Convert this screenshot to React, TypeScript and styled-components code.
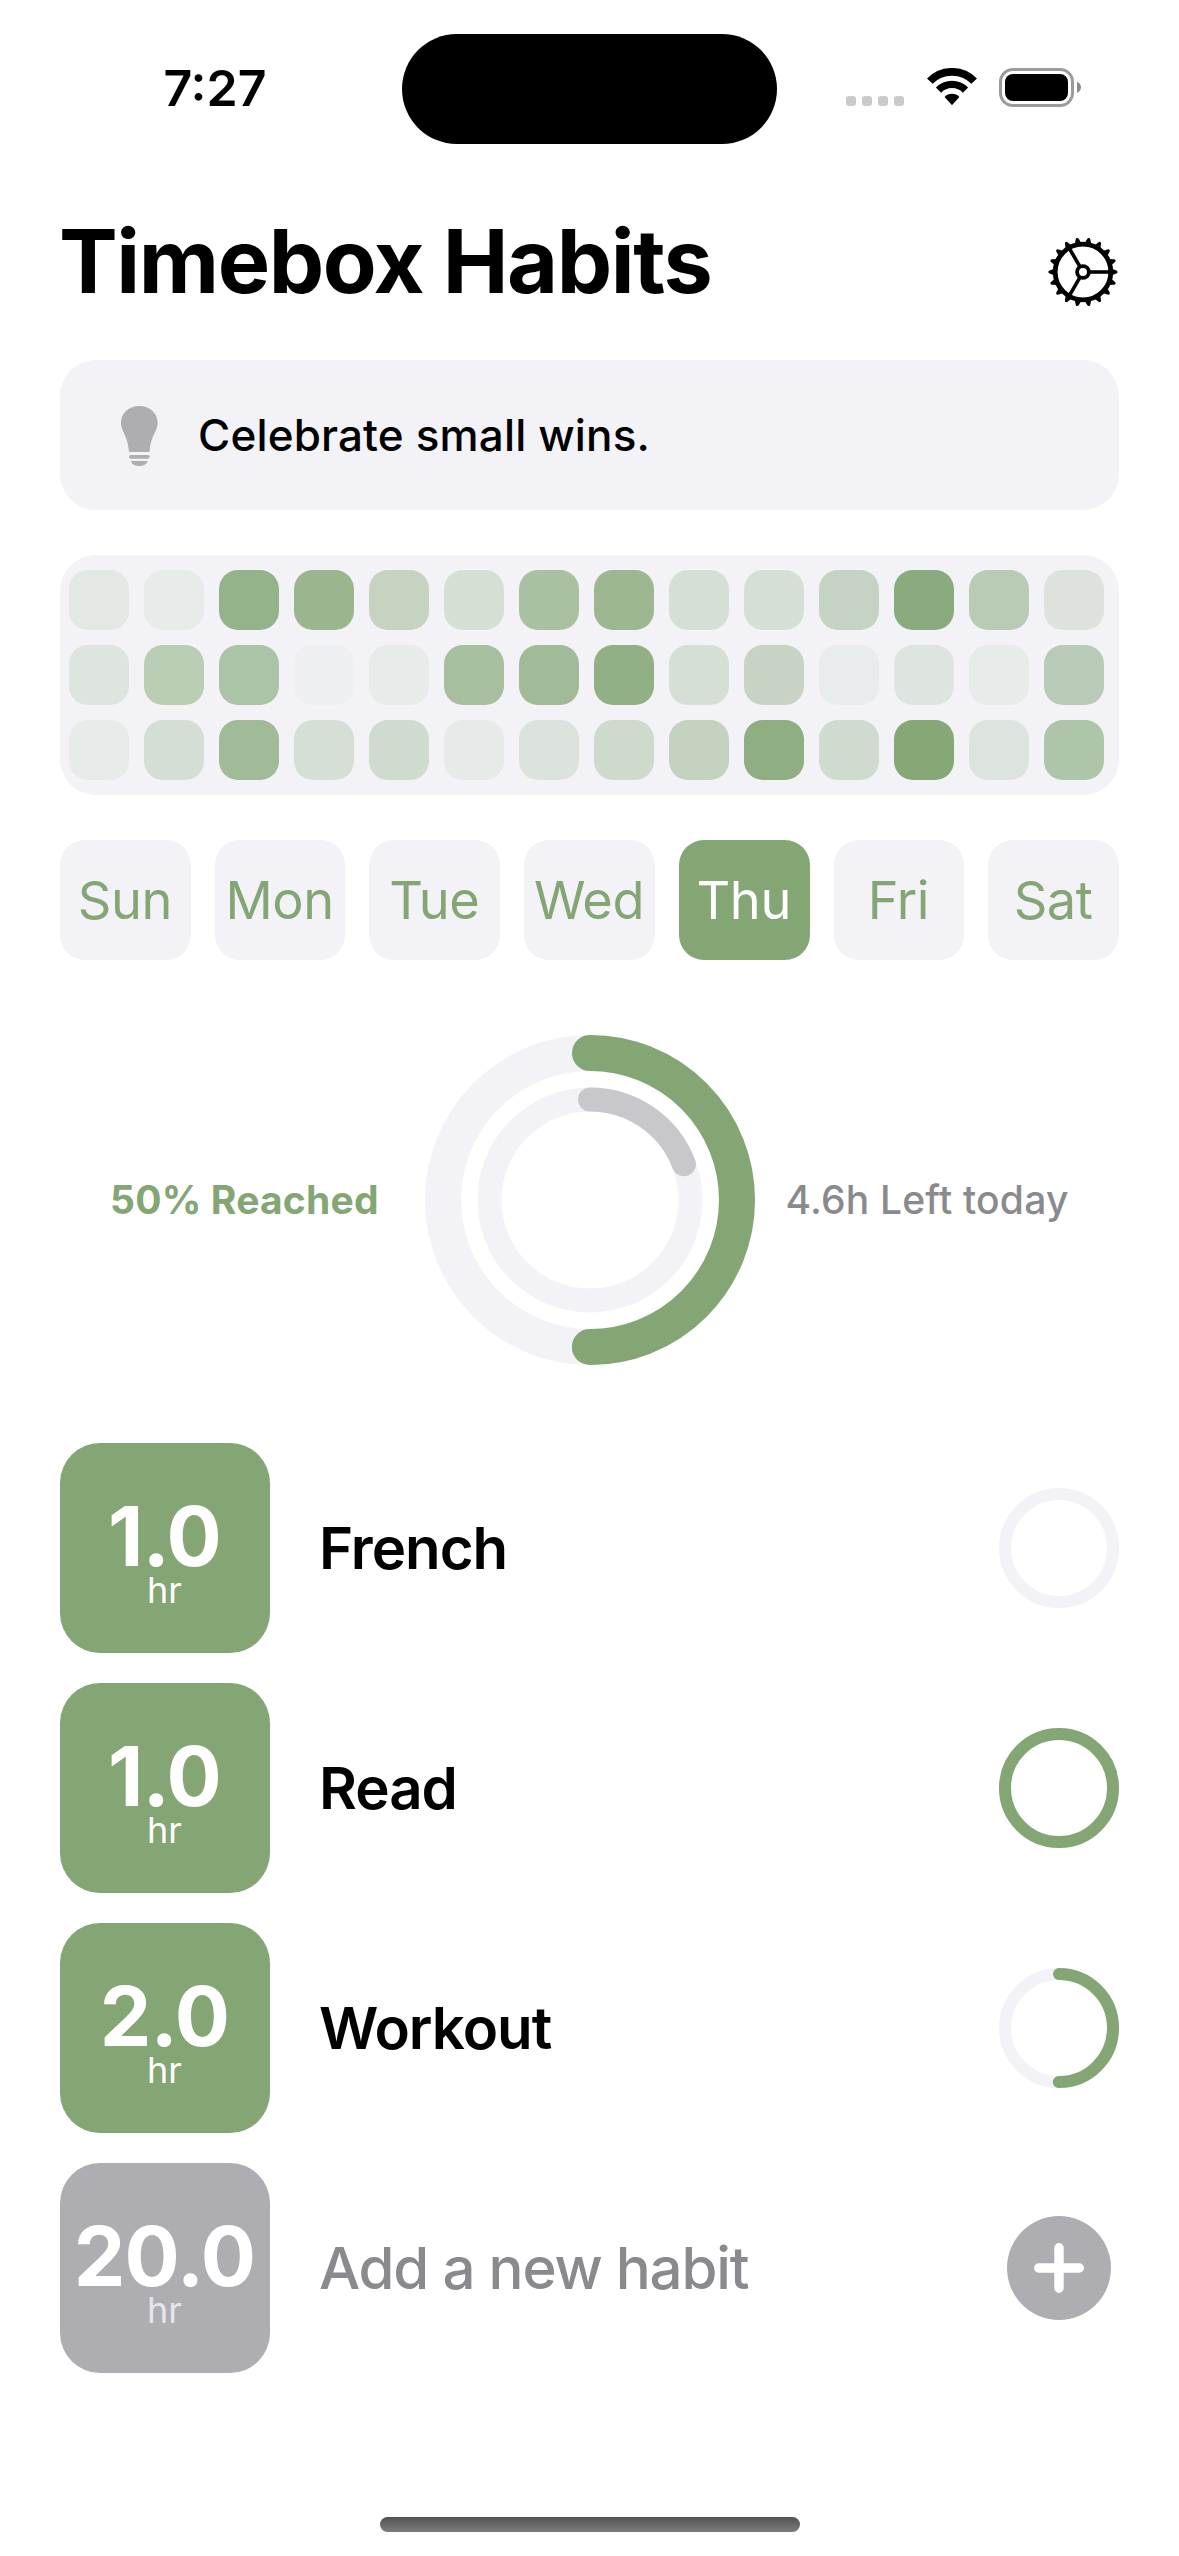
import React from "react";
import styled, { createGlobalStyle } from "styled-components";

const GREEN = "#83a674";
const PANEL = "#f2f2f7";
const GRAY = "#aeaeb2";
const LABEL = "#8a8a8e";

const GlobalStyle = createGlobalStyle`
  * { box-sizing: border-box; }
  body { margin: 0; background: #fff; }
`;

const Screen = styled.div`
  width: 1179px;
  height: 2556px;
  display: flex;
  flex-direction: column;
  background: #fff;
  color: #000;
  font-family: Inter, "Liberation Sans", sans-serif;
  overflow: hidden;
`;

const StatusBar = styled.div`
  height: 177px;
  padding-top: 34px;
  display: grid;
  grid-template-columns: 402px 375px 1fr;
  align-items: start;
`;

const Clock = styled.div`
  height: 108px;
  line-height: 108px;
  padding-left: 28px;
  text-align: center;
  font-size: 50px;
  font-weight: 600;
`;

const Island = styled.div`
  height: 110px;
  border-radius: 55px;
  background: #000;
`;

const StatusIcons = styled.div`
  height: 110px;
  padding: 34px 0 0 69px;
  display: flex;
  align-items: flex-start;
`;

const SignalDots = styled.div`
  display: flex;
  gap: 6px;
  padding-top: 28px;
  margin-right: 22px;
`;

const SignalDot = styled.span`
  width: 10px;
  height: 10px;
  border-radius: 3px;
  background: #cbcbcb;
`;

const Battery = styled.div`
  margin-left: 21px;
`;

const Header = styled.header`
  height: 183px;
  padding: 0 60px 0 59px;
  display: flex;
  justify-content: space-between;
  align-items: flex-start;
`;

const Title = styled.h1`
  margin: 0;
  padding-top: 34px;
  font-size: 88px;
  line-height: 100px;
  font-weight: 700;
  letter-spacing: -1.4px;
  white-space: nowrap;
`;

const SettingsButton = styled.button`
  margin: 59px 0 0;
  padding: 0;
  border: 0;
  background: none;
  display: flex;
`;

const Content = styled.main`
  padding: 0 60px;
  display: flex;
  flex-direction: column;
`;

const TipCard = styled.section`
  height: 150px;
  padding: 2px 0 0 61px;
  display: flex;
  align-items: center;
  gap: 40px;
  border-radius: 36px;
  background: ${PANEL};
`;

const TipText = styled.p`
  margin: 0 0 2px;
  font-size: 44px;
  line-height: 60px;
  font-weight: 460;
  letter-spacing: 0.15px;
`;

const HeatMap = styled.section`
  margin-top: 45px;
  height: 240px;
  padding: 15px 15px 15px 9px;
  display: grid;
  grid-template-columns: repeat(14, 60px);
  grid-auto-rows: 60px;
  gap: 15px;
  border-radius: 36px;
  background: ${PANEL};
`;

const HeatCell = styled.span<{ $color: string }>`
  border-radius: 19px;
  background: ${(p) => p.$color};
`;

const DayTabs = styled.nav`
  margin-top: 45px;
  display: grid;
  grid-template-columns: repeat(7, 1fr);
  gap: 24px;
`;

const DayTab = styled.button<{ $active: boolean }>`
  height: 120px;
  padding: 0 1px 0 0;
  border: 0;
  border-radius: 25px;
  background: ${(p) => (p.$active ? GREEN : PANEL)};
  color: ${(p) => (p.$active ? "#fff" : GREEN)};
  font-family: inherit;
  font-size: 52.3px;
  line-height: 120px;
  font-weight: 400;
  letter-spacing: -0.4px;
`;

const Summary = styled.section`
  margin-top: 75px;
  height: 330px;
  display: grid;
  grid-template-columns: 1fr 330px 1fr;
  align-items: center;
`;

const SummaryText = styled.div<{ $reached?: boolean }>`
  font-size: 39px;
  line-height: 50px;
  white-space: nowrap;
  padding-left: ${(p) => (p.$reached ? "50px" : "31px")};
  color: ${(p) => (p.$reached ? GREEN : LABEL)};
  font-weight: ${(p) => (p.$reached ? 700 : 500)};
  letter-spacing: 0.2px;
`;

const HabitList = styled.section`
  margin-top: 78px;
  display: flex;
  flex-direction: column;
  gap: 30px;
`;

const HabitRow = styled.div`
  height: 210px;
  display: grid;
  grid-template-columns: 210px 1fr 120px;
  align-items: center;
`;

const HourTile = styled.div<{ $muted?: boolean }>`
  height: 210px;
  padding: 58px 1px 0 0;
  display: flex;
  flex-direction: column;
  align-items: center;
  border-radius: 40px;
  background: ${(p) => (p.$muted ? GRAY : GREEN)};
  color: #fff;
`;

const HourValue = styled.div`
  font-size: 82px;
  line-height: 72px;
  font-weight: 700;
  letter-spacing: -0.8px;
`;

const HourUnit = styled.div<{ $muted?: boolean }>`
  font-size: 36px;
  line-height: 35px;
  color: ${(p) => (p.$muted ? "#e5e5ea" : "#fff")};
`;

const HabitName = styled.div<{ $muted?: boolean }>`
  padding-left: 49px;
  font-size: 58.2px;
  line-height: 70px;
  font-weight: ${(p) => (p.$muted ? 500 : 600)};
  color: ${(p) => (p.$muted ? LABEL : "#000")};
  letter-spacing: ${(p) => (p.$muted ? "-1.2px" : "-1px")};
  white-space: nowrap;
`;

const AddButton = styled.button`
  justify-self: center;
  width: 104px;
  height: 104px;
  padding: 0;
  border: 0;
  border-radius: 50%;
  background: ${GRAY};
  display: flex;
  align-items: center;
  justify-content: center;
`;

const HomeArea = styled.footer`
  margin-top: auto;
  height: 39px;
  display: flex;
  justify-content: center;
`;

const HomeIndicator = styled.div`
  width: 420px;
  height: 15px;
  border-radius: 8px;
  background: linear-gradient(#525252, #7d7d7d);
`;

const WifiIcon = () => (
  <svg width="52" height="38" viewBox="-26 -35 52 38">
    <g fill="none" stroke="#000">
      <path d="M-22.2 -21.9A31.2 31.2 0 0 1 22.2 -21.9" strokeWidth="7.7" />
      <path d="M-13.5 -12.9A18.7 18.7 0 0 1 13.5 -12.9" strokeWidth="7.4" />
    </g>
    <path d="M-7.4 -6A10 10 0 0 1 7.4 -6L0.6 1.6Q0 2.2 -0.6 1.6Z" />
  </svg>
);

const BatteryIcon = () => (
  <svg width="83" height="39" viewBox="0 0 83 39">
    <rect x="1.5" y="1.5" width="72" height="36" rx="12.5" fill="none" stroke="#9b9b9b" strokeWidth="3" />
    <rect x="6" y="6" width="63" height="27" rx="8" />
    <path d="M78 13.7Q82 15.5 82 19.3T78 25Z" fill="#8e8e8e" />
  </svg>
);

const GearIcon = () => (
  <svg width="72" height="72" viewBox="-36 -36 72 72">
    {Array.from({ length: 18 }, (_, i) => (
      <path
        key={i}
        d="M28.5 -3.4L33.2 -1.6Q34.6 -1.2 34.6 0T33.2 1.6L28.5 3.4Z"
        transform={`rotate(${i * 20})`}
      />
    ))}
    <g fill="none" stroke="#000">
      <circle r="27.8" strokeWidth="4.8" />
      <circle r="5.9" strokeWidth="3.8" />
      {[0, 120, 240].map((a) => (
        <path key={a} d="M7 0H27" strokeWidth="3.6" transform={`rotate(${a})`} />
      ))}
    </g>
  </svg>
);

const BulbIcon = () => (
  <svg width="37" height="60" viewBox="0 0 37 60" fill={GRAY}>
    <path d="M18.3 0C8 0 0 7.3 0 16.5C0 26 6.6 28.5 7.9 45Q8 46 9 46H27.6Q28.6 46 28.7 45C30 28.5 36.6 26 36.6 16.5C36.6 7.3 28.6 0 18.3 0Z" />
    <rect x="8" y="49" width="20.6" height="3.7" rx="1.8" />
    <path d="M10 55H26.6C26 58.3 22.5 60 18.3 60S10.6 58.3 10 55Z" />
  </svg>
);

type ArcProps = { r: number; width: number; value: number; color: string };

const Arc = ({ r, width, value, color }: ArcProps) => {
  const length = 2 * Math.PI * r;
  return (
    <g fill="none" strokeWidth={width} transform="rotate(-90)">
      <circle r={r} stroke={PANEL} />
      {value > 0 && (
        <circle
          r={r}
          stroke={color}
          strokeLinecap="round"
          strokeDasharray={value < 1 ? `${length * value} ${length}` : undefined}
        />
      )}
    </g>
  );
};

const heat = [
  "#e3e8e4", "#e7ecea", "#95b38a", "#9bb58f", "#c5d3c0", "#d5dfd4", "#a9c1a1",
  "#9db891", "#d5dfd6", "#d5dfd6", "#c5d3c2", "#8aab7d", "#bacbb5", "#dde3dc",
  "#dde5de", "#bacdb5", "#abc3a6", "#edeff0", "#e7ebe9", "#a8bf9f", "#a1ba97",
  "#92b085", "#d5dfd6", "#c9d3c3", "#e8eced", "#dee5e1", "#e7ebe9", "#b9cbb6",
  "#e7ebe9", "#d5ded5", "#a1ba97", "#d5dfd6", "#d0dbd0", "#e6ebe9", "#dbe3dc",
  "#cfdacd", "#c4d3bf", "#8fae81", "#cfdbcf", "#86a876", "#dde4e0", "#aec5a9",
];

const days = ["Sun", "Mon", "Tue", "Wed", "Thu", "Fri", "Sat"];

const habits = [
  { name: "French", hours: "1.0", progress: 0 },
  { name: "Read", hours: "1.0", progress: 1 },
  { name: "Workout", hours: "2.0", progress: 0.5 },
];

export default function App() {
  return (
    <Screen>
      <GlobalStyle />
      <StatusBar>
        <Clock>7:27</Clock>
        <Island />
        <StatusIcons>
          <SignalDots>
            {[0, 1, 2, 3].map((i) => (
              <SignalDot key={i} />
            ))}
          </SignalDots>
          <WifiIcon />
          <Battery>
            <BatteryIcon />
          </Battery>
        </StatusIcons>
      </StatusBar>
      <Header>
        <Title>Timebox Habits</Title>
        <SettingsButton aria-label="Settings">
          <GearIcon />
        </SettingsButton>
      </Header>
      <Content>
        <TipCard>
          <BulbIcon />
          <TipText>Celebrate small wins.</TipText>
        </TipCard>
        <HeatMap>
          {heat.map((color, i) => (
            <HeatCell key={i} $color={color} />
          ))}
        </HeatMap>
        <DayTabs>
          {days.map((day) => (
            <DayTab key={day} $active={day === "Thu"}>
              {day}
            </DayTab>
          ))}
        </DayTabs>
        <Summary>
          <SummaryText $reached>50% Reached</SummaryText>
          <svg width="330" height="330" viewBox="-165 -165 330 330">
            <Arc r={147} width={36} value={0.5} color={GREEN} />
            <Arc r={100.5} width={24} value={4.6 / 24} color="#c7c7cc" />
          </svg>
          <SummaryText>4.6h Left today</SummaryText>
        </Summary>
        <HabitList>
          {habits.map((habit) => (
            <HabitRow key={habit.name}>
              <HourTile>
                <HourValue>{habit.hours}</HourValue>
                <HourUnit>hr</HourUnit>
              </HourTile>
              <HabitName>{habit.name}</HabitName>
              <svg width="120" height="120" viewBox="-60 -60 120 120">
                <Arc r={54} width={12} value={habit.progress} color={GREEN} />
              </svg>
            </HabitRow>
          ))}
          <HabitRow>
            <HourTile $muted>
              <HourValue>20.0</HourValue>
              <HourUnit $muted>hr</HourUnit>
            </HourTile>
            <HabitName $muted>Add a new habit</HabitName>
            <AddButton aria-label="Add a new habit">
              <svg width="50" height="50" viewBox="0 0 50 50">
                <path d="M25 4.7V45.3M4.7 25H45.3" stroke="#fff" strokeWidth="9.4" strokeLinecap="round" />
              </svg>
            </AddButton>
          </HabitRow>
        </HabitList>
      </Content>
      <HomeArea>
        <HomeIndicator />
      </HomeArea>
    </Screen>
  );
}
